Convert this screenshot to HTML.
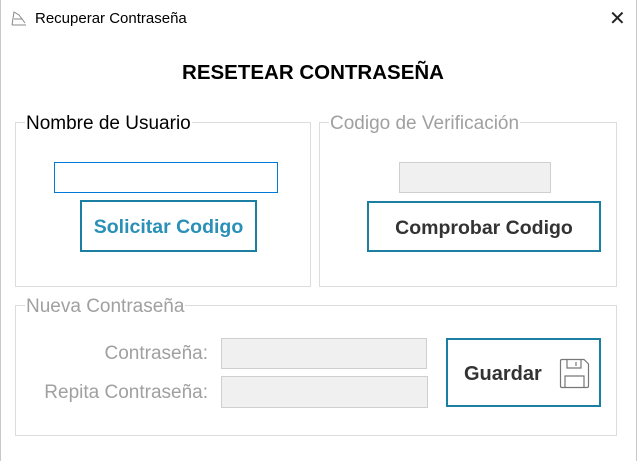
<!DOCTYPE html>
<html><head><meta charset="utf-8"><style>
*{margin:0;padding:0;box-sizing:border-box}
body{width:637px;height:461px;background:#fff;font-family:"Liberation Sans",Arial,sans-serif;position:relative;overflow:hidden}
.a{position:absolute}
.grp{position:absolute;border:1px solid #dcdcdc}
.lg{position:absolute;background:#fff;font-size:19px;padding:0 1px;line-height:22px}
.tb{position:absolute;border:1px solid #7a7a7a;background:#fff}
.dis{background:#f0f0f0;border:1px solid #cfcfcf}
.btn{position:absolute;border:2px solid #1a7fa0;background:#fff;font-weight:bold;font-size:19.5px;display:flex;align-items:center;justify-content:center;padding-top:3px}
.gl{position:absolute;color:#a0a0a0;font-size:19px;text-align:right}
</style></head><body>
<div class="a" style="left:0;top:0;width:1px;height:461px;background:#c8c8c8"></div>
<div class="a" style="right:0;top:0;width:1px;height:461px;background:#c8c8c8"></div>
<svg class="a" style="left:10px;top:9px" width="18" height="18" viewBox="0 0 18 18"><path d="M2 16 L4 3 L9 6 L15 14 M4 10 L12 10 M2 16 L16 16" stroke="#888" fill="none"/></svg>
<div class="a" style="left:35px;top:10px;font-size:15px;color:#000">Recuperar Contraseña</div>
<div class="a" style="left:609px;top:6px;font-size:20px;font-weight:300;color:#222">✕</div>
<div class="a" style="left:0;width:626px;top:61px;text-align:center;font-weight:bold;font-size:20.5px;color:#000">RESETEAR CONTRASEÑA</div>

<div class="grp" style="left:15px;top:122px;width:296px;height:165px"></div>
<div class="lg" style="left:25px;top:113px;color:#000">Nombre de Usuario</div>
<div class="tb" style="left:54px;top:162px;width:224px;height:31px;border-color:#0078d7"></div>
<div class="btn" style="left:80px;top:200px;width:177px;height:52px;color:#2a90b8">Solicitar Codigo</div>

<div class="grp" style="left:319px;top:122px;width:298px;height:165px"></div>
<div class="lg" style="left:329px;top:113px;color:#a0a0a0">Codigo de Verificación</div>
<div class="tb dis" style="left:399px;top:162px;width:152px;height:31px"></div>
<div class="btn" style="left:367px;top:201px;width:234px;height:51px;color:#333">Comprobar Codigo</div>

<div class="grp" style="left:15px;top:305px;width:602px;height:131px"></div>
<div class="lg" style="left:25px;top:296px;color:#a0a0a0">Nueva Contraseña</div>
<div class="gl" style="left:20px;width:188px;top:343px">Contraseña:</div>
<div class="gl" style="left:10px;width:198px;top:382px">Repita Contraseña:</div>
<div class="tb dis" style="left:221px;top:338px;width:206px;height:31px"></div>
<div class="tb dis" style="left:221px;top:376px;width:207px;height:32px"></div>
<div class="btn" style="left:446px;top:338px;width:155px;height:69px;color:#333;justify-content:flex-start;padding-left:16px;font-size:20px">Guardar</div>
<svg class="a" style="left:559px;top:358px" width="31" height="31" viewBox="0 0 31 31"><path d="M1.5 3 Q1.5 1.5 3 1.5 L25 1.5 L29.5 6 L29.5 28 Q29.5 29.5 28 29.5 L3 29.5 Q1.5 29.5 1.5 28 Z M8 1.5 L8 10 L22 10 L22 1.5 M17 4 L17 8 M6 29.5 L6 18 L25 18 L25 29.5" stroke="#777" stroke-width="1.2" fill="none"/></svg>
</body></html>
